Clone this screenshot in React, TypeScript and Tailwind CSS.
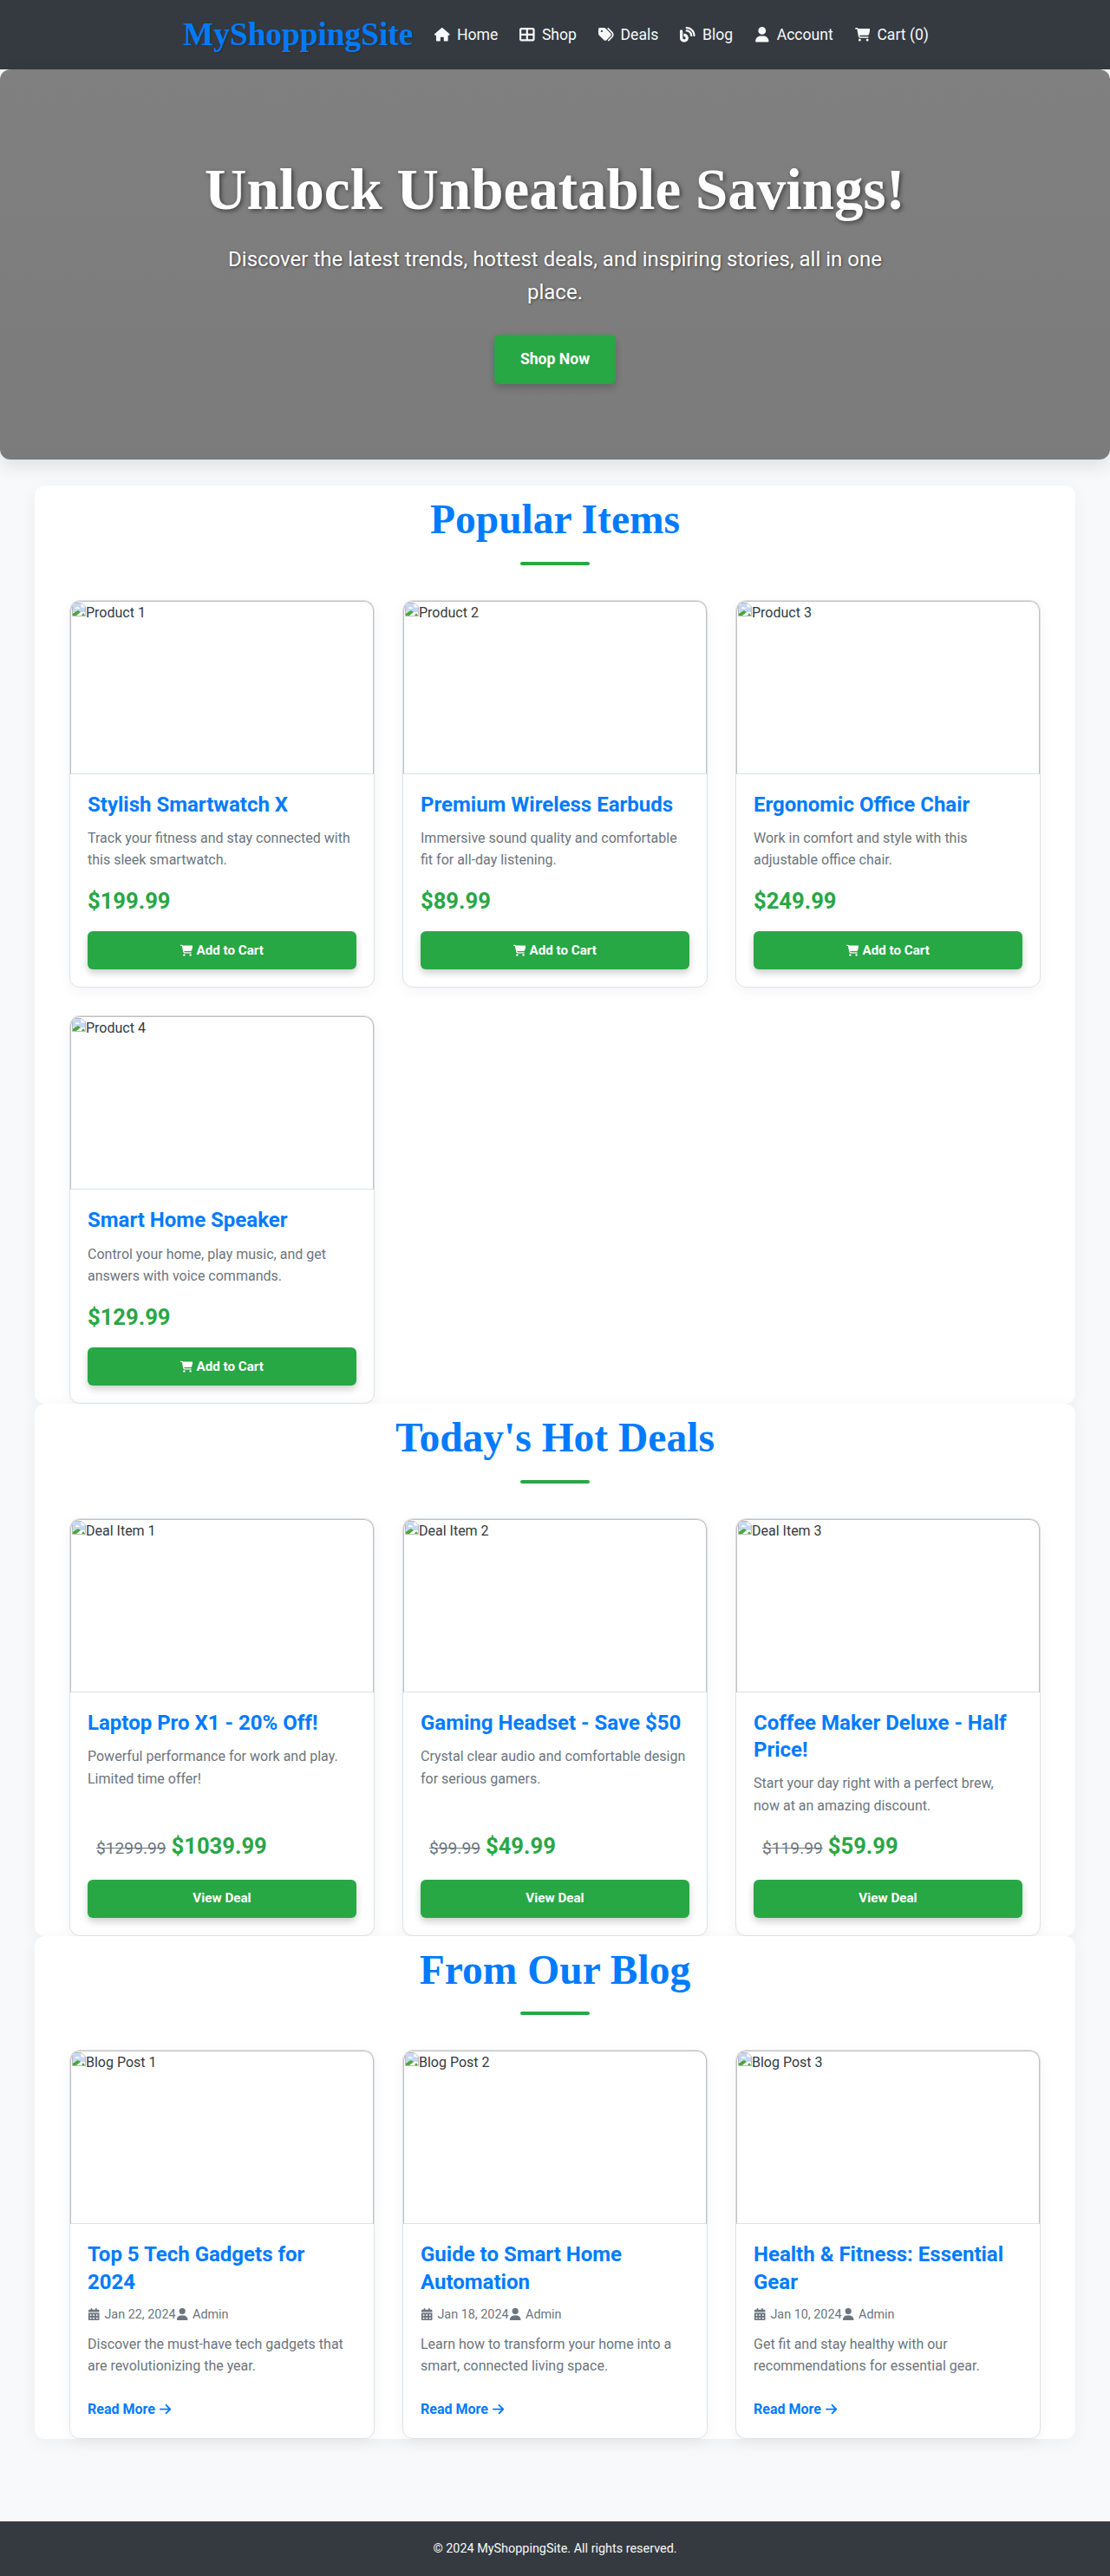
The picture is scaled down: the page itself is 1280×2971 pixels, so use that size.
import React from 'react';
import { FaHouse, FaTableCellsLarge, FaTags, FaBlog, FaUser, FaCartShopping, FaCalendarDays, FaArrowRight } from 'react-icons/fa6';

const serif = "font-['Liberation_Serif',serif]";

const navLinks = [
  { label: 'Home', icon: FaHouse },
  { label: 'Shop', icon: FaTableCellsLarge },
  { label: 'Deals', icon: FaTags },
  { label: 'Blog', icon: FaBlog },
  { label: 'Account', icon: FaUser },
  { label: 'Cart (0)', icon: FaCartShopping },
];

const products = [
  { alt: 'Product 1', title: 'Stylish Smartwatch X', desc: 'Track your fitness and stay connected with this sleek smartwatch.', price: '$199.99' },
  { alt: 'Product 2', title: 'Premium Wireless Earbuds', desc: 'Immersive sound quality and comfortable fit for all-day listening.', price: '$89.99' },
  { alt: 'Product 3', title: 'Ergonomic Office Chair', desc: 'Work in comfort and style with this adjustable office chair.', price: '$249.99' },
  { alt: 'Product 4', title: 'Smart Home Speaker', desc: 'Control your home, play music, and get answers with voice commands.', price: '$129.99' },
];

const deals = [
  { alt: 'Deal Item 1', title: 'Laptop Pro X1 - 20% Off!', desc: 'Powerful performance for work and play. Limited time offer!', old: '$1299.99', price: '$1039.99' },
  { alt: 'Deal Item 2', title: 'Gaming Headset - Save $50', desc: 'Crystal clear audio and comfortable design for serious gamers.', old: '$99.99', price: '$49.99' },
  { alt: 'Deal Item 3', title: 'Coffee Maker Deluxe - Half Price!', desc: 'Start your day right with a perfect brew, now at an amazing discount.', old: '$119.99', price: '$59.99' },
];

const posts = [
  { alt: 'Blog Post 1', title: 'Top 5 Tech Gadgets for 2024', date: 'Jan 22, 2024', desc: 'Discover the must-have tech gadgets that are revolutionizing the year.' },
  { alt: 'Blog Post 2', title: 'Guide to Smart Home Automation', date: 'Jan 18, 2024', desc: 'Learn how to transform your home into a smart, connected living space.' },
  { alt: 'Blog Post 3', title: 'Health & Fitness: Essential Gear', date: 'Jan 10, 2024', desc: 'Get fit and stay healthy with our recommendations for essential gear.' },
];

const BrokenImage = ({ alt }: { alt: string }) => (
  <div className="h-[200px] border border-[#c0c0c0] border-b-[#dee2e6] rounded-t-[11px] flex items-start text-[16px] leading-[26px] text-[#343a40] overflow-hidden">
    <svg width="16" height="16" viewBox="0 0 16 16" className="mt-[1px] ml-[1px] shrink-0">
      <path d="M0.5 0.5H11L15.5 5V15.5H0.5Z" fill="#fff" stroke="#b9b9b9" />
      <path d="M1 1H10.5V5.5H15V11H1Z" fill="#c6d7f5" />
      <path d="M4 6.5C4 5 6 4.5 7 5.5C8.5 5.5 9 6.5 9 7H3.5Z" fill="#fff" />
      <path d="M1 15V12.5L7 9L10 11L5 15Z" fill="#4aa838" />
      <path d="M11 15L13 12L15 15Z" fill="#4aa838" />
    </svg>
    <span>{alt}</span>
  </div>
);

const Card = ({ alt, children }: { alt: string; children: React.ReactNode }) => (
  <div className="flex flex-col bg-white border border-[#dee2e6] rounded-xl shadow-[0_4px_15px_rgba(0,0,0,0.05)] overflow-hidden">
    <BrokenImage alt={alt} />
    <div className="flex flex-1 flex-col p-5">{children}</div>
  </div>
);

const Title = ({ children }: { children: React.ReactNode }) => (
  <h3 className="text-[24px] leading-[31.2px] font-bold text-[#007bff] mb-2.5">{children}</h3>
);

const Desc = ({ children }: { children: React.ReactNode }) => (
  <p className="text-[16px] leading-[25.6px] text-[#6c757d] mb-[14px]">{children}</p>
);

const GreenButton = ({ children }: { children: React.ReactNode }) => (
  <button className="h-11 w-full flex items-center justify-center gap-[4px] rounded-md bg-[#28a745] text-[15.2px] font-bold text-white shadow-[0_4px_8px_rgba(0,0,0,0.2)]">
    {children}
  </button>
);

const Section = ({ title, children }: { title: string; children: React.ReactNode }) => (
  <section className="bg-white rounded-xl shadow-[0_4px_20px_rgba(0,0,0,0.05)] px-10">
    <h2 className={`${serif} h-[87.5px] pt-[3px] text-center text-[47.5px] leading-[72px] font-bold text-[#007bff]`}>{title}</h2>
    <div className="mx-auto mb-10 h-1 w-20 rounded-sm bg-[#28a745]" />
    <div className="grid grid-cols-3 gap-8">{children}</div>
  </section>
);

export default function App() {
  return (
    <div className="min-h-[2971px] flex flex-col bg-[#f8f9fa] font-['Roboto',sans-serif] text-[#343a40]">
      <header className="h-20 bg-[#343a40] flex items-center justify-center gap-[25px] pl-[2px]">
        <div className={`${serif} text-[37.3px] font-bold leading-none text-[#007bff] [text-shadow:1px_1px_2px_rgba(0,0,0,0.2)]`}>MyShoppingSite</div>
        <nav className="flex items-center gap-[25px]">
          {navLinks.map(({ label, icon: Icon }) => (
            <a key={label} className="flex items-center gap-2 text-[17.6px] text-[#f8f9fa]">
              <Icon className="text-[17.6px]" />
              {label}
            </a>
          ))}
        </nav>
      </header>

      <div className="h-[450px] rounded-xl bg-[linear-gradient(#808080,#7b7b7b)] shadow-[0_8px_20px_rgba(0,0,0,0.1)] flex flex-col items-center text-white">
        <h1 className={`${serif} mt-[100px] text-[67px] leading-[76px] font-bold [text-shadow:2px_2px_5px_rgba(0,0,0,0.5)]`}>Unlock Unbeatable Savings!</h1>
        <p className="mt-6 w-[800px] text-center text-[24px] leading-[38.4px] [text-shadow:1px_1px_3px_rgba(0,0,0,0.5)]">
          Discover the latest trends, hottest deals, and inspiring stories, all in one place.
        </p>
        <button className="mt-[29px] h-[57px] w-[140px] rounded-md bg-[#28a745] text-[17.6px] font-bold text-white shadow-[0_4px_8px_rgba(0,0,0,0.2)]">Shop Now</button>
      </div>

      <main className="mx-10 mt-[30px] flex flex-col">
        <Section title="Popular Items">
          {products.map((p) => (
            <Card key={p.alt} alt={p.alt}>
              <Title>{p.title}</Title>
              <Desc>{p.desc}</Desc>
              <div className="text-[25.6px] leading-[40.5px] font-bold text-[#28a745] mb-[15px]">{p.price}</div>
              <GreenButton><FaCartShopping className="text-[14.4px]" />Add to Cart</GreenButton>
            </Card>
          ))}
        </Section>
        <Section title="Today's Hot Deals">
          {deals.map((d) => (
            <Card key={d.alt} alt={d.alt}>
              <Title>{d.title}</Title>
              <Desc>{d.desc}</Desc>
              <div className="mt-auto mb-[15px] flex items-baseline gap-[6px] pl-2.5 leading-[40.5px]">
                <span className="text-[19.2px] text-[#6c757d] line-through">{d.old}</span>
                <span className="text-[25.6px] font-bold text-[#28a745]">{d.price}</span>
              </div>
              <GreenButton>View Deal</GreenButton>
            </Card>
          ))}
        </Section>
        <Section title="From Our Blog">
          {posts.map((b) => (
            <Card key={b.alt} alt={b.alt}>
              <Title>{b.title}</Title>
              <div className="mb-2.5 flex items-center text-[14.4px] leading-[23px] text-[#6c757d]">
                <span className="flex items-center gap-[5px]"><FaCalendarDays className="text-[14.4px]" />{b.date}</span>
                <span className="flex items-center gap-[5px]"><FaUser className="text-[14.4px]" />Admin</span>
              </div>
              <Desc>{b.desc}</Desc>
              <a className="mt-[10px] flex items-center gap-[4px] text-[16px] leading-[25.6px] font-bold text-[#007bff]">Read More <FaArrowRight className="text-[15.2px]" /></a>
            </Card>
          ))}
        </Section>
      </main>

      <footer className="mt-auto h-[63px] bg-[#343a40] flex items-center justify-center text-[14.4px] text-[#f8f9fa]">
        © 2024 MyShoppingSite. All rights reserved.
      </footer>
    </div>
  );
}
